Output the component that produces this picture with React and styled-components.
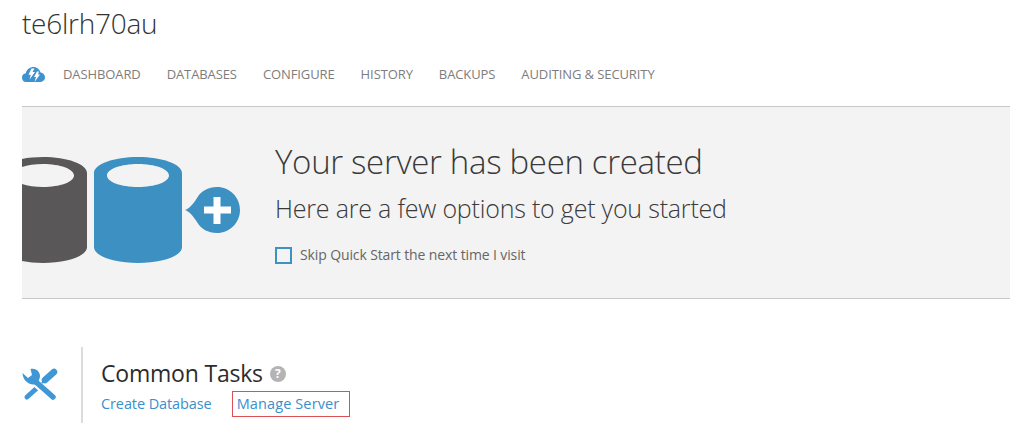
import React from "react";
import styled, { createGlobalStyle } from "styled-components";

const Global = createGlobalStyle`
  html, body { margin: 0; padding: 0; background: #fff; }
  body { font-family: "Open Sans", "Noto Sans", sans-serif; overflow: hidden; }
`;
const Page = styled.div`
  width: 1024px; height: 428px; overflow: hidden; box-sizing: border-box;
  padding: 0 14px 0 22px; display: flex; flex-direction: column;
`;
const Title = styled.h1`
  margin: 0; height: 50px; padding-top: 4px; box-sizing: border-box; font-size: 28px; line-height: 38px;
  font-weight: 300; color: #333; letter-spacing: -0.25px;
`;
const Nav = styled.nav`
  display: flex; align-items: center; height: 48px;
`;
const Logo = styled.svg`
  width: 23px; height: 15px; margin-right: 18px; flex: none;
`;
const NavItem = styled.a`
  font-size: 13px; color: #7d7d7d; margin-right: 26px; line-height: 48px; letter-spacing: -0.1px; white-space: nowrap;
`;
const Hero = styled.section`
  margin-top: 8px; height: 193px; box-sizing: border-box; background: #f3f3f3;
  border-top: 1px solid #c8c8c8; border-bottom: 1px solid #c8c8c8;
  display: flex; overflow: hidden;
`;
const Art = styled.svg`
  width: 252px; height: 191px; flex: none;
`;
const HeroText = styled.div`
  display: flex; flex-direction: column; padding-top: 33px; margin-left: 1px;
`;
const HeroTitle = styled.h2`
  margin: 0; font-size: 33px; line-height: 44px; font-weight: 300; color: #3a3a3a; letter-spacing: -0.32px; white-space: nowrap;
`;
const HeroSub = styled.p`
  margin: 6px 0 0; font-size: 25px; line-height: 36px; font-weight: 300; color: #3a3a3a; letter-spacing: -0.2px; white-space: nowrap;
`;
const SkipRow = styled.label`
  display: flex; align-items: center; gap: 8px; margin-top: 19px; font-size: 14px; line-height: 20px; color: #666; letter-spacing: -0.12px;
`;
const Box = styled.span`
  width: 13px; height: 13px; border: 2px solid #3e92c2; flex: none; display: block;
`;
const Tasks = styled.section`
  margin-top: 48px; display: flex; align-items: stretch; height: 76px;
`;
const TaskIcon = styled.div`
  width: 61px; display: flex; align-items: center; flex: none; border-right: 2px solid #dcdcdc; box-sizing: border-box; margin-right: 18px;
`;
const TaskBody = styled.div`
  display: flex; flex-direction: column; padding-top: 10px;
`;
const TaskHead = styled.h3`
  margin: 0; display: flex; align-items: center; gap: 7px; font-size: 23px; line-height: 32px; font-weight: 400; color: #2c2c2c; letter-spacing: -0.2px;
`;
const Help = styled.span`
  width: 16px; height: 16px; border-radius: 50%; background: #b4b4b4; color: #fff; font-size: 12px; font-weight: 700; line-height: 16px; text-align: center; letter-spacing: 0; margin-top: 1px;
`;
const Links = styled.div`
  display: flex; align-items: center; margin-top: 2px;
`;
const TaskLink = styled.a`
  font-size: 14.5px; line-height: 24px; color: #3a8fcb; white-space: nowrap;
  letter-spacing: ${p => (p.$marked ? "0.12px" : "-0.1px")};
  margin-right: 20px; padding: ${p => (p.$marked ? "0 10px 0 4px" : "0")};
  border: ${p => (p.$marked ? "1px solid #dc4f55" : "0")};
`;

const Cylinder = ({ x, fill }) => (
  <path
    fillRule="evenodd"
    fill={fill}
    d={`M${x} 66 C${x} 57 ${x + 20} 50 ${x + 44} 50 C${x + 68} 50 ${x + 88} 57 ${x + 88} 66 L${x + 88} 140 C${x + 88} 149 ${x + 68} 156 ${x + 44} 156 C${x + 20} 156 ${x} 149 ${x} 140 Z M${x + 13} 68.5 C${x + 13} 75 ${x + 27} 80 ${x + 44} 80 C${x + 61} 80 ${x + 75} 75 ${x + 75} 68.5 C${x + 75} 62 ${x + 61} 57 ${x + 44} 57 C${x + 27} 57 ${x + 13} 62 ${x + 13} 68.5 Z`}
  />
);

export default function App() {
  return (
    <>
      <Global />
      <Page>
        <Title>te6lrh70au</Title>
        <Nav>
          <Logo viewBox="0 0 23 15">
            <path fill="#3e92d0" d="M4 15 C1.5 15 0 13 0 10.5 C0 8 1.7 6.4 3.8 6.2 C4.5 2.5 8 0 11.5 0 C15 0 17.8 2.5 18.6 5.6 C21 5.8 23 7.8 23 10.3 C23 13 21 15 18.5 15 Z" />
            <path fill="#fff" d="M9.5 1.5 L12.5 1.5 L10.5 5 L13 5 L7.5 12.5 L8.8 7.8 L6.5 7.8 Z" />
            <path fill="#fff" d="M15 4.5 L17 4.5 L16 7.5 L18 7.5 L12.5 15 L14 10 L12 10 Z" />
          </Logo>
          <NavItem>DASHBOARD</NavItem>
          <NavItem>DATABASES</NavItem>
          <NavItem>CONFIGURE</NavItem>
          <NavItem>HISTORY</NavItem>
          <NavItem>BACKUPS</NavItem>
          <NavItem>AUDITING &amp; SECURITY</NavItem>
        </Nav>
        <Hero>
          <Art viewBox="0 0 252 191">
            <Cylinder x={-23} fill="#595757" />
            <Cylinder x={72} fill="#3d90c2" />
            <path fill="#3d90c2" d="M163 103 C168 101 171 97 175 91 C179 84 186 80 195 80 C207.7 80 218 90.3 218 103 C218 115.7 207.7 126 195 126 C186 126 179 122 175 115 C171 109 168 105 163 103 Z" />
            <path fill="#fff" d="M191.5 90 H198.5 V99.5 H209 V106.5 H198.5 V117 H191.5 V106.5 H182 V99.5 H191.5 Z" />
          </Art>
          <HeroText>
            <HeroTitle>Your server has been created</HeroTitle>
            <HeroSub>Here are a few options to get you started</HeroSub>
            <SkipRow><Box />Skip Quick Start the next time I visit</SkipRow>
          </HeroText>
        </Hero>
        <Tasks>
          <TaskIcon>
            <svg width="36" height="36" viewBox="0 0 36 36">
              <g fill="none" stroke="#3f97d6" strokeLinecap="round">
                <path strokeWidth="6.5" d="M32 5 L23 13" />
                <path strokeWidth="2" d="M23 13 L16 20" />
                <path strokeWidth="5" d="M15 21 L5 30" />
                <path stroke="#fff" strokeWidth="8" strokeLinecap="butt" d="M15 17 L20 21.5" />
                <path strokeWidth="5.5" d="M14 15 L31 30" />
              </g>
              <path fill="#3f97d6" d="M0.5 6 L6 11 L10 8 L8.5 2 C13 0.5 18 4 18 9 C18 12 16 15 14 17 C9 19 1 15 0.5 6 Z" />
            </svg>
          </TaskIcon>
          <TaskBody>
            <TaskHead>Common Tasks <Help>?</Help></TaskHead>
            <Links>
              <TaskLink>Create Database</TaskLink>
              <TaskLink $marked>Manage Server</TaskLink>
            </Links>
          </TaskBody>
        </Tasks>
      </Page>
    </>
  );
}
